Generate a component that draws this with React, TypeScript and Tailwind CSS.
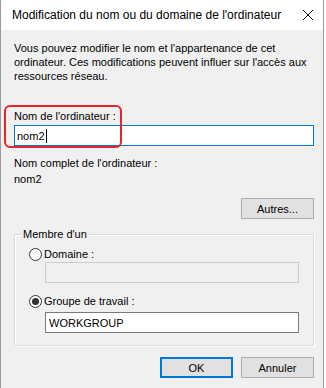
import React from "react";

const body = { fontFamily: '"Liberation Sans", Arial, sans-serif' };

function Radio({ checked }: { checked?: boolean }) {
  return (
    <span className="flex h-[13px] w-[13px] items-center justify-center rounded-full border border-[#333] bg-white">
      {checked && <span className="h-[7px] w-[7px] rounded-full bg-[#333]" />}
    </span>
  );
}

function Button({ label, primary }: { label: string; primary?: boolean }) {
  return (
    <div
      className={`flex h-[21px] w-[73px] items-center justify-center bg-[#e1e1e1] text-[11px] text-black ${
        primary ? "border-2 border-[#0078d7]" : "border border-[#adadad]"
      }`}
    >
      {label}
    </div>
  );
}

export default function App() {
  return (
    <div className="relative h-[388px] w-[326px] overflow-hidden bg-white" style={body}>
      <div className="flex h-full w-[324px] flex-col border-x border-[#9a9a9a]">
        <div className="flex h-[30px] shrink-0 items-center justify-between bg-white pl-[11px] pr-[8px]">
          <span className="text-[12px] text-black">Modification du nom ou du domaine de l'ordinateur</span>
          <svg width="12" height="12" viewBox="0 0 12 12" className="mr-[1px]">
            <path d="M1 1 L11 11 M11 1 L1 11" stroke="#111" strokeWidth="1" />
          </svg>
        </div>

        <div className="flex flex-1 flex-col bg-[#f0f0f0] pl-[13px] pr-[9px] text-[11px] leading-[14px] text-black">
          <p className="mt-[11px]">
            Vous pouvez modifier le nom et l'appartenance de cet ordinateur. Ces modifications peuvent influer sur
            l'accès aux ressources réseau.
          </p>

          <div className="mt-[26px]">Nom de l'ordinateur :</div>
          <div className="mt-[2px] flex h-[21px] items-center border border-[#0078d7] bg-white px-[2px]">
            <span>nom2</span>
            <span className="ml-[1px] h-[14px] w-[1px] bg-black" />
          </div>

          <div className="mt-[10px]">Nom complet de l'ordinateur :</div>
          <div className="mt-[2px]">nom2</div>

          <div className="mt-[12px] flex justify-end">
            <Button label="Autres..." />
          </div>

          <div className="relative mt-[15px] h-[112px] border border-[#dcdcdc] shadow-[inset_1px_1px_0_#fff,1px_1px_0_#fff]">
            <span className="absolute left-[7px] top-[-8px] bg-[#f0f0f0] px-[1px]">Membre d'un</span>
            <div className="flex flex-col pl-[14px] pr-[14px] pt-[12px]">
              <div className="flex items-center gap-[2px]">
                <Radio />
                <span>Domaine :</span>
              </div>
              <div className="ml-[16px] mt-[1px] h-[21px] border border-[#cccccc] bg-[#f0f0f0]" />
              <div className="mt-[11px] flex items-center gap-[2px]">
                <Radio checked />
                <span>Groupe de travail :</span>
              </div>
              <div className="ml-[16px] mt-[4px] flex h-[21px] items-center border border-[#7a7a7a] bg-white px-[3px]">
                WORKGROUP
              </div>
            </div>
          </div>

          <div className="mt-[11px] flex justify-end gap-[8px]">
            <Button label="OK" primary />
            <Button label="Annuler" />
          </div>
        </div>
      </div>

      <div className="pointer-events-none absolute left-[4px] top-[105px] h-[43px] w-[118px] rounded-[6px] border-2 border-[#e5242c]" />
    </div>
  );
}
